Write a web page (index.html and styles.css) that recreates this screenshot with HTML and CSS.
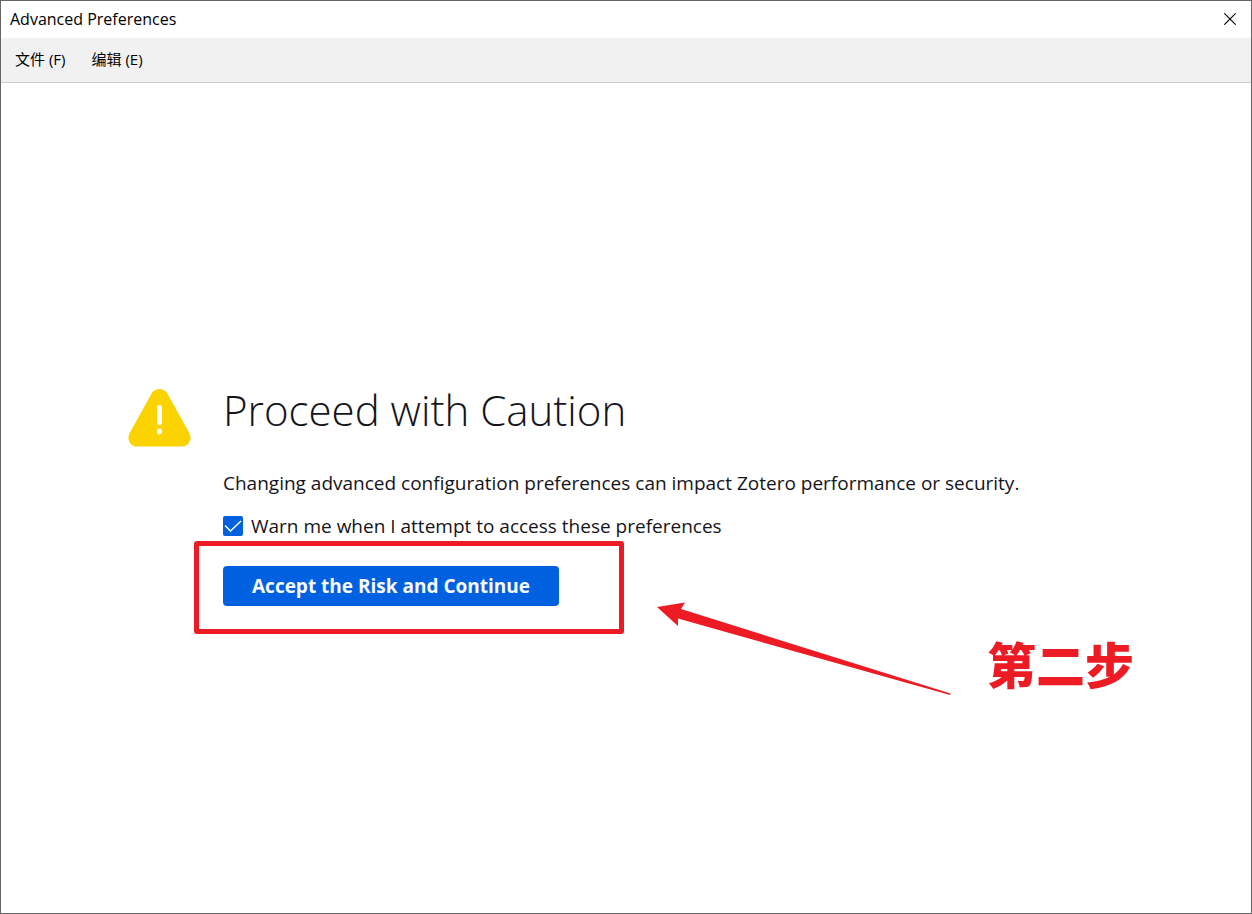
FILE: index.html
```html
<!DOCTYPE html>
<html lang="zh-CN">
<head>
    <meta charset="UTF-8">
    <meta name="viewport" content="width=device-width, initial-scale=1.0">
    <title>Advanced Preferences</title>
    <link rel="stylesheet" href="styles.css">
</head>
<body>
    <div class="window">
        <header class="title-bar">
            <span class="title">Advanced Preferences</span>
            <button class="close-btn" type="button" aria-label="Close">
                <svg width="12" height="12" viewBox="0 0 12 12">
                    <path d="M0.3 0.3 L11.7 11.7 M11.7 0.3 L0.3 11.7" stroke="#000" stroke-width="1.1" fill="none"/>
                </svg>
            </button>
        </header>

        <nav class="menu-bar">
            <button class="menu-item" type="button">文件 (F)</button>
            <button class="menu-item" type="button">编辑 (E)</button>
        </nav>

        <main class="content">
            <section class="warning">
                <svg class="warning-icon" width="64" height="64" viewBox="-1 0 64 64" aria-hidden="true">
                    <path d="M23.6 7.6 C27 1.4 36 1.4 39.4 7.6 L61.4 47.2 C64.6 53 60.8 60.5 54 60.5 L9 60.5 C2.2 60.5 -1.6 53 1.6 47.2 Z" fill="#fbd300"/>
                    <rect x="29" y="19" width="5" height="20" rx="2.5" fill="#fff"/>
                    <rect x="29" y="42.5" width="5" height="6" rx="2.4" fill="#fff"/>
                </svg>

                <div class="warning-body">
                    <h1>Proceed with Caution</h1>
                    <p class="warning-text">Changing advanced configuration preferences can impact Zotero performance or security.</p>
                    <div class="check-row">
                        <input type="checkbox" id="showWarning" checked>
                        <label for="showWarning">Warn me when I attempt to access these preferences</label>
                    </div>
                    <div class="action">
                        <button class="accept-btn" type="button">Accept the Risk and Continue</button>
                        <!-- hand-drawn marks over the page -->
                        <div class="mark-box"></div>
                        <svg class="mark-arrow" width="294" height="93" viewBox="0 0 294 93" aria-hidden="true">
                            <path d="M0 5 L28 0.500 L24 7 L293.500 91.500 L293 93 L21 16.500 L21 24 Z" fill="#ed1c24"/>
                        </svg>
                        <div class="mark-label">第二步</div>
                    </div>
                </div>
            </section>
        </main>
    </div>
</body>
</html>
```
FILE: styles.css
```css
* {
    margin: 0;
    padding: 0;
    box-sizing: border-box;
}

body {
    font-family: "Open Sans", "Noto Sans CJK SC", sans-serif;
    font-size: 15px;
    color: #15141a;
    background: #fff;
}

button {
    font: inherit;
    border: none;
    background: none;
}

.window {
    display: flex;
    flex-direction: column;
    min-height: 100vh;
    border: 1px solid #666;
}

/* Title bar and menu */
.title-bar {
    display: flex;
    align-items: center;
    justify-content: space-between;
    height: 37px;
    padding: 0 0 2px 9px;
    color: #000;
    font-size: 16px;
}

.close-btn {
    display: flex;
    align-items: center;
    justify-content: center;
    width: 42px;
    height: 34px;
}

.menu-bar {
    display: flex;
    align-items: center;
    gap: 26px;
    height: 45px;
    padding: 0 14px 2px;
    background: #f1f1f1;
    border-bottom: 1px solid #ccc;
}

.menu-item {
    color: #000;
    line-height: 24px;
}

/* Warning page */
.content {
    flex: 1;
    display: flex;
    align-items: center;
    justify-content: center;
    padding-bottom: 4px;
}

.warning {
    display: flex;
    gap: 32px;
    width: 100%;
    max-width: 998px;
}

.warning-icon {
    flex: none;
}

.warning-body {
    flex: 1;
}

h1 {
    font-size: 42px;
    font-weight: 300;
    line-height: 48px;
    margin-bottom: 35px;
}

.warning-text {
    font-size: 19px;
    line-height: 28px;
    margin-bottom: 15px;
}

.check-row {
    display: flex;
    align-items: center;
    gap: 8px;
    font-size: 19px;
    line-height: 28px;
    margin-bottom: 26px;
}

.check-row input {
    appearance: none;
    width: 20px;
    height: 20px;
    border-radius: 2px;
    background: #0061e0 url("data:image/svg+xml,%3Csvg xmlns='http://www.w3.org/2000/svg' viewBox='0 0 20 20'%3E%3Cpath d='M2 9.500 L7.500 15 L18 5' fill='none' stroke='white' stroke-width='1.400'/%3E%3C/svg%3E");
}

.action {
    position: relative;
}

.accept-btn {
    height: 40px;
    padding: 0 29px 1px;
    border-radius: 4px;
    background: #0061e0;
    color: #fbfbfe;
    font-size: 19px;
    font-weight: 700;
}

/* Marks */
.mark-box {
    position: absolute;
    top: -25px;
    left: -29px;
    width: 430px;
    height: 93px;
    border: 5px solid #ed1c24;
    border-radius: 3px;
    pointer-events: none;
}

.mark-arrow {
    position: absolute;
    top: 36px;
    left: 434px;
}

.mark-label {
    position: absolute;
    top: 61px;
    left: 764px;
    color: #ed1c24;
    font-family: "Noto Sans CJK SC", sans-serif;
    font-size: 49px;
    font-weight: 900;
    line-height: 72px;
    white-space: nowrap;
}
```
